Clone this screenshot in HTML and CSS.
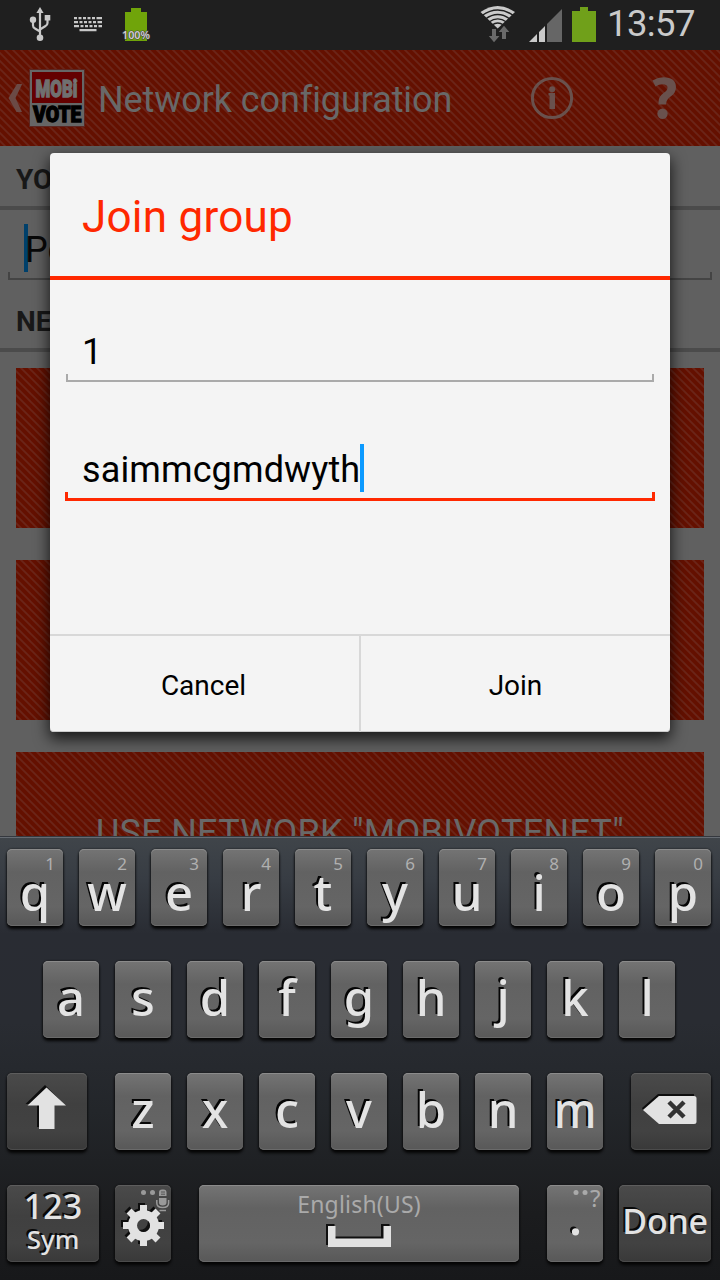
FILE: index.html
```html
<!DOCTYPE html>
<html lang="en">
<head>
<meta charset="utf-8">
<title>Network configuration</title>
<link rel="stylesheet" href="styles.css">
</head>
<body>
<div class="phone">
  <header class="status">
    <svg class="status-left" width="240" height="50" viewBox="0 0 240 50">
      <g fill="none" stroke="#c8c8c8" stroke-width="2.200">
        <path d="M40 12V37M33 20v5.500q0 2 2 3l5 3M47.500 18v5q0 2-2 3l-5.500 3.500"/>
      </g>
      <g fill="#c8c8c8">
        <path d="M40 7l3.600 6h-7.200z"/><circle cx="40" cy="37.700" r="3.300"/><circle cx="33" cy="19.700" r="3.200"/><path d="M44.700 15h5.600v5.500h-5.600z"/>
        <path d="M74 17h3v2.200h-3zM78.500 17h3v2.200h-3zM83 17h3v2.200h-3zM87.500 17h3v2.200h-3zM92 17h3v2.200h-3zM96.500 17h5.500v2.200h-5.500zM74 21h4v2.200h-4zM79.500 21h3v2.200h-3zM84 21h3v2.200h-3zM88.500 21h3v2.200h-3zM93 21h3v2.200h-3zM97.500 21h4.500v2.200h-4.500zM74 25h5v2.200h-5zM80.500 25h3v2.200h-3zM85 25h3v2.200h-3zM89.500 25h3v2.200h-3zM94 25h3v2.200h-3zM98.500 25h3.500v2.200h-3.500zM79.500 29h17v2.200h-17z"/>
      </g>
      <path fill="#70a40a" d="M131 8h10v4h6v29h-22V12h6z"/>
      <text class="battery-label" x="122" y="39.300" textLength="28" lengthAdjust="spacingAndGlyphs">100%</text>
    </svg>
    <svg width="122" height="50" viewBox="476 0 122 50">
      <path fill="#cacaca" d="M480.500 12Q497.700 0 515 12L497.700 28.500z"/>
      <g fill="none" stroke="#1f1f1f" stroke-width="1.400">
        <path d="M482 15.500Q497.700 4.500 513.400 15.500M485.500 19Q497.700 10 510 19M489 22Q497.700 15.800 506.500 22M492 25Q497.700 21 503.500 25"/>
      </g>
      <path fill="#6a6a6a" d="M492 29h4v7h3.500l-5.500 6.300-5.200-6.300h3.200zM502 39v-7h-3.300l5.300-6.300 5.300 6.300H506v7z"/>
      <path fill="#cacaca" d="M529 42l8-8v8zM539 32l6-6v16h-6z"/>
      <path fill="#666" d="M547 24l15-15v33h-15z"/>
      <path fill="#70a01a" d="M580 7h8v4h8v31h-24V11h8z"/>
    </svg>
    <span class="clock">13:57</span>
  </header>

  <nav class="actionbar striped">
    <svg class="back" width="16" height="30" viewBox="0 0 16 30"><path d="M10 1h5.200L8.500 15l6.500 14H9.500L1.500 15z" fill="#6b4a45"/></svg>
    <div class="logo"><svg width="54" height="56" viewBox="0 0 54 56">
      <path fill="#666" d="M0 0h54v56H0z"/><path fill="#640000" d="M2 2h50v31H2z"/>
      <text class="logo-text" x="5.500" y="26.500" textLength="42" lengthAdjust="spacingAndGlyphs" fill="#707070" stroke="#707070">MOBi</text>
      <text class="logo-text vote" x="3" y="52" textLength="48.500" lengthAdjust="spacingAndGlyphs" fill="#000" stroke="#000">VOTE</text>
      <path d="M45.500 9v4M43.500 11h4" stroke="#777"/>
    </svg></div>
    <h1 class="title">Network configuration</h1>
    <svg class="info" width="44" height="44" viewBox="0 0 44 44"><circle cx="22" cy="22" r="19.600" fill="none" stroke="#69514d" stroke-width="3"/><circle cx="22.200" cy="13.200" r="3" fill="#69514d"/><path d="M18.500 17h6.500v16h-5.500V19.500h-1z" fill="#69514d"/></svg>
    <svg class="help" width="27" height="44" viewBox="0 0 27 44"><path d="M2.500 4.500Q8 1.300 13.500 1.300Q26 1.300 26 11.500Q26 17 20 21Q16 24 16 28.500H8.500V26Q8.500 20.500 13.500 17Q17.500 14.500 17.500 11.800Q17.500 8.200 12.500 8.200Q9 8.200 5.500 10.500z" fill="#69514d"/><circle cx="12.500" cy="37.700" r="5.200" fill="#69514d"/></svg>
  </nav>

  <main class="content">
    <h2 class="section">YO</h2>
    <div class="name-input"><i class="caret-dim"></i><span>Pe</span></div>
    <h2 class="section second">NE</h2>
    <div class="cards">
      <div class="card striped"></div>
      <div class="card striped"></div>
      <div class="card striped"><span class="card-text">USE NETWORK "MOBIVOTENET"</span></div>
    </div>
  </main>

  <section class="keyboard">
    <div class="row numbered">
      <div class="key"><small>1</small><b>q</b></div><div class="key"><small>2</small><b>w</b></div><div class="key"><small>3</small><b>e</b></div><div class="key"><small>4</small><b>r</b></div><div class="key"><small>5</small><b>t</b></div><div class="key"><small>6</small><b>y</b></div><div class="key"><small>7</small><b>u</b></div><div class="key"><small>8</small><b>i</b></div><div class="key"><small>9</small><b>o</b></div><div class="key"><small>0</small><b>p</b></div>
    </div>
    <div class="row mid">
      <div class="key"><b>a</b></div><div class="key"><b>s</b></div><div class="key"><b>d</b></div><div class="key"><b>f</b></div><div class="key"><b>g</b></div><div class="key"><b>h</b></div><div class="key"><b>j</b></div><div class="key"><b>k</b></div><div class="key"><b>l</b></div>
    </div>
    <div class="row spread">
      <div class="key dark wide"><svg width="80" height="77" viewBox="0 0 80 77"><path d="M38 12L18.500 31H30v23h15V31h12z" fill="#0d0d0d"/><path d="M39.500 14.500L20.500 32.500H32V56h15.500V32.500h11.500z" fill="#e2e2e2"/></svg></div>
      <div class="letters"><div class="key"><b>z</b></div><div class="key"><b>x</b></div><div class="key"><b>c</b></div><div class="key"><b>v</b></div><div class="key"><b>b</b></div><div class="key"><b>n</b></div><div class="key"><b class="narrow">m</b></div></div>
      <div class="key dark wide"><svg width="80" height="77" viewBox="0 0 80 77"><path d="M11 35L27 21h36v2H28L12 37z" fill="#0d0d0d"/><path d="M12 37L28 23h35q2.500 0 2.500 2.500v23q0 2.500-2.500 2.500H28z" fill="#e2e2e2"/><path d="M38 29l15 15M53 29L38 44" stroke="#333" stroke-width="4.500"/></svg></div>
    </div>
    <div class="row bottom">
      <div class="key dark sym"><span class="num">123</span><span class="symtext">Sym</span></div>
      <div class="key dark"><svg width="56" height="77" viewBox="0 0 56 77">
        <g fill="#0d0d0d" transform="translate(26.500 38.500)"><circle r="15"/><path d="M-3.500-20.500h7v41h-7zM-20.500-3.500h41v7h-41z"/><path d="M-3.500-20.500h7v41h-7zM-20.500-3.500h41v7h-41z" transform="rotate(45)"/></g>
        <g fill="#e2e2e2" transform="translate(28.500 40.500)"><circle r="15.500"/><path d="M-3.500-20.500h7v41h-7zM-20.500-3.500h41v7h-41z"/><path d="M-3.500-20.500h7v41h-7zM-20.500-3.500h41v7h-41z" transform="rotate(45)"/><circle r="6.500" fill="#424242"/><path d="M4.600-4.600A6.500 6.500 0 0 1-4.600 4.600Q4 4 4.600-4.600" fill="#111"/></g>
        <circle cx="28.500" cy="7.500" r="2.500" fill="#999"/><circle cx="37.500" cy="7.500" r="2.500" fill="#999"/>
        <path d="M44 11V7.500q0-3 3-3h1.500q3 0 3 3V11z" fill="#999"/><path d="M46 7h4M46 9.200h4" stroke="#555" stroke-width="1"/>
        <path d="M44 13h7.500v4.500q0 3-3.800 3t-3.700-3z" fill="#999"/>
        <path d="M41.800 15v3q0 4.500 5.900 4.500t5.900-4.500v-3M44.500 25.500h6.500" fill="none" stroke="#999" stroke-width="1.500"/>
      </svg></div>
      <div class="key space"><span class="lang">English(US)</span><svg class="space-icon" width="66" height="24" viewBox="0 0 66 24"><path d="M0 0h8.500v12.500h18.500V12.500h28V0h8.500v21H0z" fill="#101010"/><path d="M2 2h7.500v12.500H57.500V2H65v21H2z" fill="#e2e2e2"/></svg></div>
      <div class="key dot"><svg width="56" height="77" viewBox="0 0 56 77"><circle cx="29" cy="7.500" r="2.500" fill="#aaa"/><circle cx="38" cy="7.500" r="2.500" fill="#aaa"/><text class="hint" x="43" y="22">?</text><circle cx="26.500" cy="45" r="3.500" fill="#0b0b0b"/><circle cx="28.500" cy="46.800" r="3.600" fill="#e2e2e2"/></svg></div>
      <div class="key dark done"><span>Done</span></div>
    </div>
  </section>

  <section class="dialog">
    <h2 class="dialog-title"><span>Join group</span></h2>
    <div class="dialog-body">
      <div class="field"><span>1</span></div>
      <div class="field focus"><span>saimmcgmdwyth</span><i class="caret"></i></div>
    </div>
    <div class="buttons"><button>Cancel</button><button>Join</button></div>
  </section>
</div>
</body>
</html>
```
FILE: styles.css
```css
* { box-sizing: border-box; }
body { margin: 0; background: #606060; font-family: Roboto, "Liberation Sans", sans-serif; }
h1, h2 { margin: 0; font-weight: 400; }
.phone { position: relative; width: 720px; height: 1280px; overflow: hidden; display: flex; flex-direction: column; }
.status { height: 50px; flex: none; background: #1f1f1f; display: flex; }
.status-left { margin-right: 236px; }
.status svg { flex: none; }
.battery-label { font: 600 11px "Noto Sans", sans-serif; fill: #d0d0d0; stroke: #444; stroke-width: 1.2px; paint-order: stroke; }
.clock { margin-left: 9px; font-size: 36.500px; line-height: 48px; color: #cacaca; white-space: nowrap; letter-spacing: -.6px; }
.striped {
  background-color: #641000;
  background-image: url("data:image/svg+xml,%3Csvg xmlns='http://www.w3.org/2000/svg' width='8' height='8'%3E%3Cpath d='M-4-4L12 12M4-4L12 4M-4 4L4 12' stroke='%236b2519' stroke-width='1.700'/%3E%3C/svg%3E");
  background-position: 5px 0;
}
.actionbar { height: 96px; flex: none; display: flex; align-items: center; padding-left: 7px; }
.back { flex: none; margin: 0 7px 0 0; }
.logo { width: 54px; height: 56px; flex: none; box-shadow: 0 0 0 1px #5a2722; }
.logo svg { display: block; }
.logo-text { font: 900 24px Roboto, sans-serif; stroke-width: 1.3px; }
.vote { font-size: 22px; }
.title { width: 360px; margin: 4px 0 0 14px; flex: none; font-size: 36px; line-height: 44px; color: #686868; white-space: nowrap; letter-spacing: -.09px; }
.info { margin-left: 72px; flex: none; }
.help { margin-left: 76px; flex: none; }
.content { height: 690px; flex: none; overflow: hidden; background: #606060; }
.section { height: 64px; padding: 2px 16px 0; font-weight: 700; font-size: 28px; line-height: 64px; color: #181818; border-bottom: 4px solid #4b4b4b; }
.name-input { display: flex; align-items: center; height: 70px; margin: 0 8px; padding: 6px 16px 0; font-size: 36px; color: #080808; background: linear-gradient(#444, #444) 0 100% / 100% 2px no-repeat, linear-gradient(#444, #444) 0 100% / 2px 8px no-repeat, linear-gradient(#444, #444) 100% 100% / 2px 8px no-repeat; }
.name-input span { margin: 3px 0 0 -3px; }
.caret-dim { width: 4px; height: 48px; background: #00406b; }
.section.second { height: 72px; line-height: 80px; }
.cards { display: flex; flex-direction: column; gap: 32px; padding: 16px 16px 0; }
.card { height: 160px; flex: none; display: flex; align-items: center; justify-content: center; }
.card-text { padding-top: 2px; font-size: 36px; font-weight: 400; color: #686868; white-space: nowrap; letter-spacing: .28px; }

.keyboard { height: 444px; flex: none; padding: 13px 9px 18px 7px; display: flex; flex-direction: column; gap: 35px; background: linear-gradient(#40454a 0, #373c43 10%, #292c33 22%, #292c32 42%, #23262a 62%, #1b1c1e 85%, #17181a 100%); box-shadow: inset 0 1px #35383e, inset 0 2px #666b72; }
.row { display: flex; height: 77px; gap: 16px; flex: none; }
.mid { padding-left: 36px; }
.spread { gap: 28px; }
.letters { display: flex; gap: 16px; }
.key { position: relative; width: 56px; height: 77px; flex: none; border-radius: 5px; color: #e3e3e3; font-family: "Noto Sans", sans-serif; background: linear-gradient(#747474, #626262 30%, #656565 75%, #585858); box-shadow: inset 0 1px #8b8b8b, inset 0 -1px #6a6a6a, 0 3px 3px #050505, 0 0 2px #111; }
.dark { background: linear-gradient(#4a4a4a, #404040 40%, #424242 75%, #393939); box-shadow: inset 0 1px #5d5d5d, inset 0 -1px #4b4b4b, 0 3px 3px #050505, 0 0 2px #111; }
.key svg { display: block; }
.key b { display: block; text-align: center; font-size: 49px; font-weight: 500; line-height: 72px; text-shadow: -2px -2px #050505; }
.key b.narrow { transform: scaleX(.92); }
.key small { position: absolute; top: 3px; right: 8px; font-size: 17px; line-height: 24px; color: #b0b0b0; }
.numbered b { padding-top: 7px; }
.wide { width: 80px; }
.sym { width: 92px; display: flex; flex-direction: column; align-items: center; text-shadow: -2px -2px #080808; font-weight: 500; }
.num { font-size: 34px; line-height: 42px; }
.symtext { font-size: 26px; line-height: 24px; }
.space { width: 320px; margin-left: 12px; margin-right: 12px; display: flex; flex-direction: column; align-items: center; }
.lang { font-size: 23px; line-height: 39px; color: #aaa; letter-spacing: .2px; }
.space-icon { margin-top: 0; }
.hint { font: 24px "Noto Sans", sans-serif; fill: #aaa; }
.done { width: 92px; display: flex; justify-content: center; font-size: 34px; font-weight: 500; line-height: 73px; letter-spacing: -.3px; text-shadow: -2px -2px #080808; }

.dialog { position: absolute; left: 50px; top: 153px; width: 620px; height: 579px; border-radius: 4px; display: flex; flex-direction: column; background: #f4f4f4; box-shadow: 0 6px 15px 1px rgba(0,0,0,.75), inset 0 -1px #ccc; }
.dialog-title { height: 127px; flex: none; padding: 4px 32px 0; border-bottom: 4px solid #ff2800; color: #ff2800; font-size: 44px; line-height: 120px; letter-spacing: .25px; }
.dialog-body { height: 354px; flex: none; padding: 40px 15px 0; display: flex; flex-direction: column; gap: 56px; }
.field { margin: 0 1px; height: 62px; display: flex; align-items: center; padding: 2px 0 0 16px; font-size: 36px; color: #000; background: linear-gradient(#aaa, #aaa) 0 100% / 100% 2px no-repeat, linear-gradient(#aaa, #aaa) 0 100% / 2px 8px no-repeat, linear-gradient(#aaa, #aaa) 100% 100% / 2px 8px no-repeat; }
.focus { margin: 0; height: 63px; padding: 0 0 0 17px; letter-spacing: .12px; background: linear-gradient(#ff2800, #ff2800) 0 100% / 100% 3px no-repeat, linear-gradient(#ff2800, #ff2800) 0 100% / 3px 9px no-repeat, linear-gradient(#ff2800, #ff2800) 100% 100% / 3px 9px no-repeat; }
.caret { width: 4px; height: 48px; margin-bottom: 4px; background: #0c9aff; }
.buttons { flex: none; height: 98px; display: grid; grid-template-columns: 311px 309px; border-top: 2px solid #d8d8d8; }
.buttons button { border: 0; background: none; padding: 2px 0 0; font: 28px Roboto, sans-serif; color: #000; }
.buttons button:first-child { border-right: 2px solid #d8d8d8; padding-right: 2px; }
```
